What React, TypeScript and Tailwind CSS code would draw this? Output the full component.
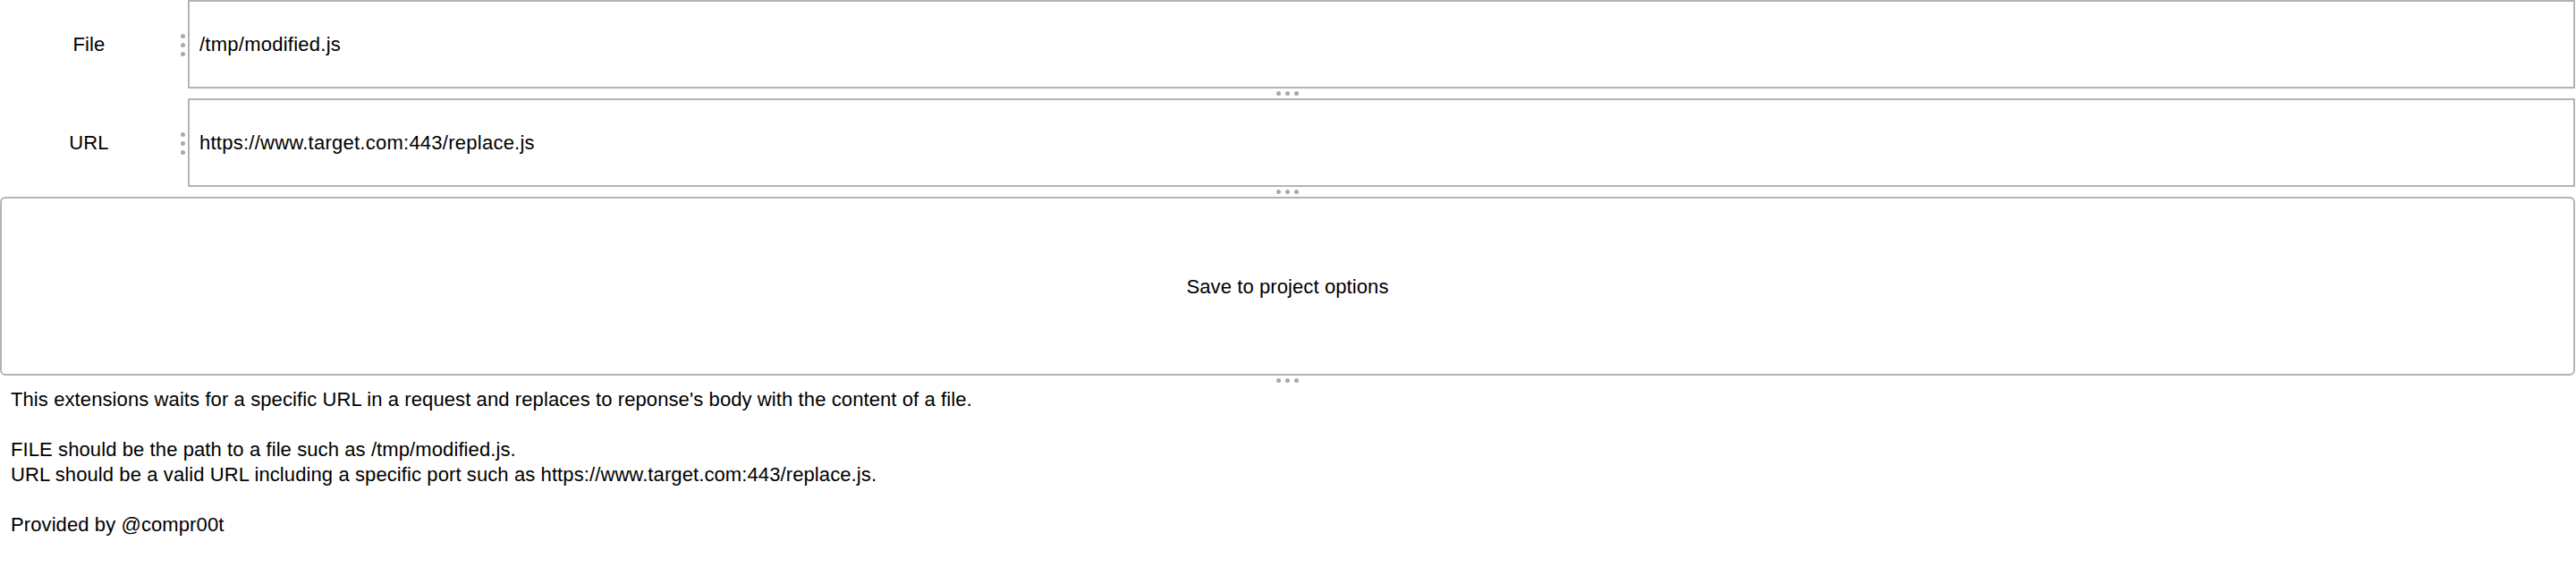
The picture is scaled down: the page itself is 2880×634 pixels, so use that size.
const BORDER = "border-2 border-[#b7b3b5]";

function Dots({ vertical = false }: { vertical?: boolean }) {
  return (
    <div className={vertical ? "flex flex-col items-center gap-[5px]" : "flex items-center gap-[5px]"}>
      {[0, 1, 2].map((i) => (
        <div key={i} className="w-[5px] h-[5px] rounded-full bg-[#a9a9a9]" />
      ))}
    </div>
  );
}

function Splitter() {
  return (
    <div className="h-[11px] flex items-center justify-center">
      <Dots />
    </div>
  );
}

function Field({ label, value }: { label: string; value: string }) {
  return (
    <div className="flex h-[99px]">
      <div className="w-[199px] flex items-center justify-center text-[22px]">{label}</div>
      <div className="w-[11px] flex items-center justify-center pt-[2px]">
        <Dots vertical />
      </div>
      <div className={`flex-1 flex items-center pl-[11px] text-[22px] tracking-[0.25px] ${BORDER}`}>{value}</div>
    </div>
  );
}

export default function App() {
  return (
    <div className="w-[2880px] pr-[1px] bg-white text-black font-['Liberation_Sans',Arial,sans-serif] tracking-[0.1px]">
      <Field label="File" value="/tmp/modified.js" />
      <Splitter />
      <Field label="URL" value="https://www.target.com:443/replace.js" />
      <Splitter />

      {/* Save button */}
      <div className={`h-[200px] rounded-[6px] flex items-center justify-center text-[22px] ${BORDER}`}>
        Save to project options
      </div>
      <Splitter />

      {/* Description */}
      <div className="pl-[12px] pt-[2px] text-[22px] leading-[28px]">
        <p>This extensions waits for a specific URL in a request and replaces to reponse's body with the content of a file.</p>
        <p className="h-[28px]" />
        <p>FILE should be the path to a file such as /tmp/modified.js.</p>
        <p>URL should be a valid URL including a specific port such as https://www.target.com:443/replace.js.</p>
        <p className="h-[28px]" />
        <p>Provided by @compr00t</p>
      </div>
    </div>
  );
}
